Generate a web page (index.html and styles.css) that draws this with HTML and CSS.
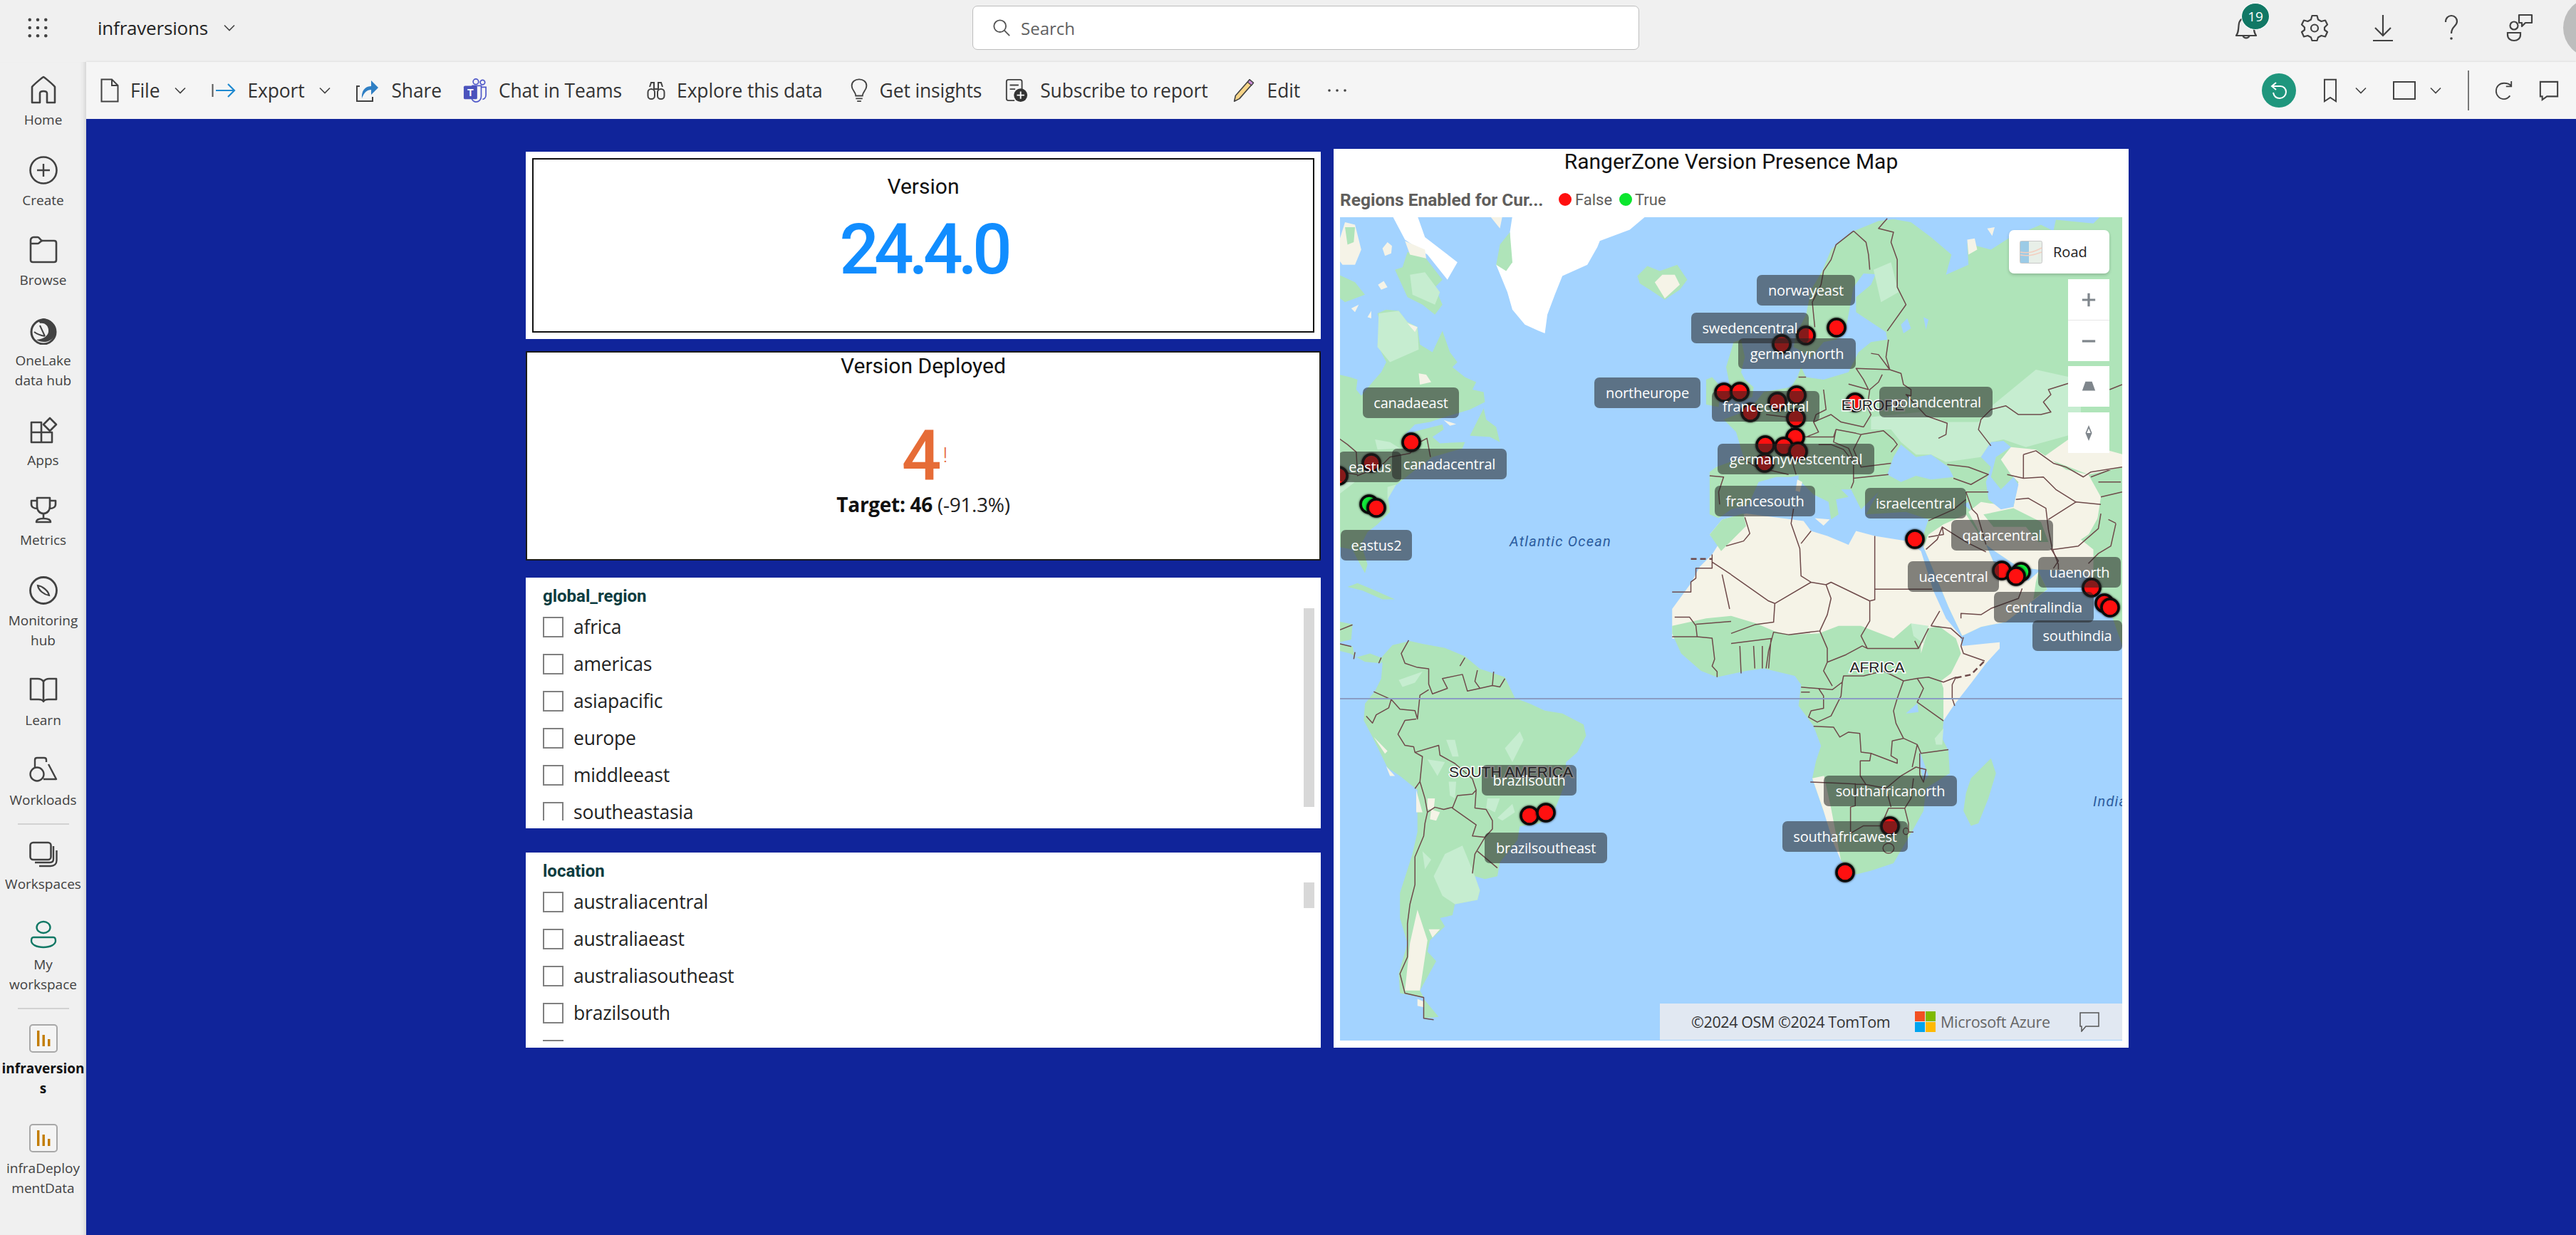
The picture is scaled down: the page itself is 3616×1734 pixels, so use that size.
FILE: index.html
```html
<!DOCTYPE html>
<html lang="en">
<head>
<meta charset="utf-8">
<title>infraversions</title>
<link rel="stylesheet" href="styles.css">
</head>
<body>
<svg class="defs" width="0" height="0"><defs>
<symbol id="chev" viewBox="0 0 16 10"><path d="M1 1.5 L8 8.5 L15 1.5" fill="none" stroke="currentColor" stroke-width="1.6"/></symbol>
<symbol id="report" viewBox="0 0 40 40"><rect x="1" y="1" width="38" height="38" rx="4" fill="#f4f4f4" stroke="#a8a8a8" stroke-width="2"/><rect x="11" y="9" width="3.4" height="22" fill="#c27c00"/><rect x="18.5" y="15" width="3.4" height="16" fill="#c27c00"/><rect x="26" y="21" width="3.4" height="10" fill="#c27c00"/></symbol>
</defs></svg>

<header class="topbar">
  <div class="top-left">
    <svg class="waffle" viewBox="0 0 32 32"><g fill="#424242"><circle cx="4" cy="4" r="2.4"/><circle cx="16" cy="4" r="2.4"/><circle cx="28" cy="4" r="2.4"/><circle cx="4" cy="16" r="2.4"/><circle cx="16" cy="16" r="2.4"/><circle cx="28" cy="16" r="2.4"/><circle cx="4" cy="28" r="2.4"/><circle cx="16" cy="28" r="2.4"/><circle cx="28" cy="28" r="2.4"/></g></svg>
    <span class="app-name">infraversions</span>
    <svg class="chev chev-top"><use href="#chev"/></svg>
  </div>
  <div class="search">
    <svg class="search-ico" viewBox="0 0 28 28"><circle cx="11.5" cy="11.5" r="9" fill="none" stroke="#555" stroke-width="2"/><path d="M18 18 L26 26" stroke="#555" stroke-width="2"/></svg>
    <span>Search</span>
  </div>
  <div class="top-right">
    <div class="ti bell">
      <svg viewBox="0 0 30 40"><path d="M1 31 C4 27 4 24 4.500 17 C5 9 9 6 15 6 C21 6 25 9 25.500 17 C26 24 26 27 29 31 Z" fill="none" stroke="#424242" stroke-width="2.200" stroke-linejoin="round"/><path d="M10.500 31.500 A5 5 0 0 0 19.500 31.500" fill="none" stroke="#424242" stroke-width="2.200"/></svg>
      <span class="badge">19</span>
    </div>
    <svg class="ti" viewBox="0 0 40 40"><path d="M16.500 3 H23.500 L25 8.500 L29.500 11 L35 9.500 L38 15.500 L34 19.500 V23 L38 26 L35 32.500 L29.500 31 L25 33.500 L23.500 38 H16.500 L15 33.500 L10.500 31 L5 32.500 L2 26 L6 23 V19.500 L2 15.500 L5 9.500 L10.500 11 L15 8.500 Z" fill="none" stroke="#424242" stroke-width="2.200" stroke-linejoin="round"/><circle cx="20" cy="20.500" r="5" fill="none" stroke="#424242" stroke-width="2.200"/></svg>
    <svg class="ti" viewBox="0 0 40 40"><path d="M20 2 V31 M9 20 L20 31 L31 20 M6 38 H34" fill="none" stroke="#424242" stroke-width="2.200"/></svg>
    <svg class="ti" viewBox="0 0 40 40"><path d="M12 12 C12 6 16 3 20 3 C25 3 28 7 28 11 C28 18 20 18 20 28" fill="none" stroke="#424242" stroke-width="2.200"/><circle cx="20" cy="35" r="1.800" fill="#424242"/></svg>
    <svg class="ti" viewBox="0 0 40 40"><circle cx="12" cy="17" r="5.500" fill="none" stroke="#424242" stroke-width="2.200"/><path d="M3 27 H21 V30 C21 35 17 38 12 38 C7 38 3 35 3 30 Z" fill="none" stroke="#424242" stroke-width="2.200"/><path d="M19 2 H37 V13 H28 L23 18 V13 H19 Z" fill="none" stroke="#424242" stroke-width="2.200" stroke-linejoin="round"/></svg>
    <div class="avatar"></div>
  </div>
</header>

<div class="body-row">
  <nav class="sidebar">
    <a class="nav"><svg viewBox="0 0 40 40"><path d="M20 2 C17 4 6 13 4 16 V38 H15 V25 C15 21 25 21 25 25 V38 H36 V16 C34 13 23 4 20 2 Z" fill="none" stroke="#424242" stroke-width="2.600" stroke-linejoin="round"/></svg><span>Home</span></a>
    <a class="nav"><svg viewBox="0 0 40 40"><circle cx="20" cy="20" r="18.500" fill="none" stroke="#424242" stroke-width="2.600"/><path d="M20 11 V29 M11 20 H29" stroke="#424242" stroke-width="2.400"/></svg><span>Create</span></a>
    <a class="nav"><svg viewBox="0 0 40 40"><path d="M2 6 C2 4 4 2 6 2 H12 C15 2 15 7 19 7 H35 C37 7 38 8 38 10 V34 C38 36 37 37 35 37 H5 C3 37 2 36 2 34 Z M2 11 H12 C15 11 15 7 19 7" fill="none" stroke="#424242" stroke-width="2.600"/></svg><span>Browse</span></a>
    <a class="nav two"><svg viewBox="0 0 40 40"><circle cx="20" cy="22" r="17" fill="none" stroke="#424242" stroke-width="3"/><path d="M20 3 C14 4 12 8 16 10 C22 9 28 14 27 22 C26 28 20 32 10 33 C18 38 32 38 37 24 C38 14 30 4 20 3 Z" fill="#424242"/><path d="M15 13 L22 28 M7 22 C12 26 16 27 22 28" fill="none" stroke="#424242" stroke-width="2"/></svg><span>OneLake data hub</span></a>
    <a class="nav"><svg viewBox="0 0 40 40"><path d="M3 9 H17 V23 H3 Z M3 23 H17 V37 H3 Z M17 23 H32 V37 H17 Z" fill="none" stroke="#424242" stroke-width="2.600" stroke-linejoin="round"/><path d="M29 3 L38 12 L29 21 L20 12 Z" fill="none" stroke="#424242" stroke-width="2.600" stroke-linejoin="round"/></svg><span>Apps</span></a>
    <a class="nav"><svg viewBox="0 0 40 40"><path d="M11 3 H29 V15 C29 21 25 25 20 25 C15 25 11 21 11 15 Z M11 7 H3 V12 C3 16 7 18 11 18 M29 7 H37 V12 C37 16 33 18 29 18 M20 25 V32 M10 37 C10 33 14 32 20 32 C26 32 30 33 30 37 Z" fill="none" stroke="#424242" stroke-width="2.600" stroke-linejoin="round"/></svg><span>Metrics</span></a>
    <a class="nav two"><svg viewBox="0 0 40 40"><circle cx="20" cy="20" r="18.500" fill="none" stroke="#424242" stroke-width="2.800"/><path d="M12 13 C19 14 27 21 28 27 C21 26 13 20 12 13 Z" fill="none" stroke="#424242" stroke-width="2.200"/></svg><span>Monitoring hub</span></a>
    <a class="nav"><svg viewBox="0 0 40 40"><path d="M20 8 C18 5 15 4 12 4 H2 V33 H13 C16 33 19 34 20 36 C21 34 24 33 27 33 H38 V4 H28 C25 4 22 5 20 8 Z M20 8 V36" fill="none" stroke="#424242" stroke-width="2.600" stroke-linejoin="round"/></svg><span>Learn</span></a>
    <a class="nav n95"><svg viewBox="0 0 40 40"><path d="M8 17 V6 C8 4 9 3 11 3 H21 C23 3 24 4 24 6 V9" fill="none" stroke="#424242" stroke-width="2.400"/><circle cx="11" cy="26" r="9.500" fill="none" stroke="#424242" stroke-width="2.400"/><path d="M27 12 L38 33 H20" fill="none" stroke="#424242" stroke-width="2.400" stroke-linejoin="round"/></svg><span>Workloads</span></a>
    <div class="divider"></div>
    <a class="nav"><svg viewBox="0 0 40 40"><rect x="1.500" y="4" width="29" height="24" rx="4" fill="none" stroke="#424242" stroke-width="2.600"/><path d="M34 9 V27 C34 30 32 32 29 32 H8 M38.500 15 V29 C38.500 34 35 37 30 37 H14" fill="none" stroke="#424242" stroke-width="2.400"/></svg><span>Workspaces</span></a>
    <a class="nav n123"><svg viewBox="0 0 40 40"><ellipse cx="20" cy="10" rx="9.500" ry="8" fill="none" stroke="#117865" stroke-width="2.400"/><path d="M6 24 H34 C37 24 37 27 37 29 C37 34 30 38 20 38 C10 38 3 34 3 29 C3 27 3 24 6 24 Z" fill="none" stroke="#117865" stroke-width="2.400"/></svg><span>My workspace</span></a>
    <div class="divider"></div>
    <a class="nav two active"><svg><use href="#report"/></svg><span>infraversions</span></a>
    <a class="nav two"><svg><use href="#report"/></svg><span>infraDeploymentData</span></a>
  </nav>

  <div class="main">
    <div class="toolbar">
      <div class="tb tb-file">
        <svg class="tbi w26" viewBox="0 0 26 34"><path d="M1.500 1.500 H16 L24.500 10 V32.500 H1.500 Z M16 1.500 V10 H24.500" fill="none" stroke="#424242" stroke-width="2"/></svg>
        <span>File</span><svg class="chev"><use href="#chev"/></svg>
      </div>
      <div class="tb tb-export">
        <svg class="tbi w34" viewBox="0 0 34 24"><path d="M1.500 3 V21" stroke="#555" stroke-width="2"/><path d="M6 12 H32 M23 3 L32 12 L23 21" fill="none" stroke="#1f8ad0" stroke-width="2.200"/></svg>
        <span>Export</span><svg class="chev"><use href="#chev"/></svg>
      </div>
      <div class="tb tb-share">
        <svg class="tbi w34" viewBox="0 0 34 34"><path d="M6 11 H2 V32 H24 V26" fill="none" stroke="#424242" stroke-width="2"/><path d="M9 28 C8 17 14 11 22 11 V3 L32 13 L22 23 V16 C16 16 12 20 9 28 Z" fill="#2f7fc4"/></svg>
        <span>Share</span>
      </div>
      <div class="tb tb-teams">
        <svg class="tbi w34" viewBox="0 0 34 36"><circle cx="28" cy="6" r="3.500" fill="none" stroke="#5059c9" stroke-width="1.800"/><circle cx="18" cy="5" r="4" fill="none" stroke="#5059c9" stroke-width="1.800"/><path d="M26 13 H33 V25 C33 29 30 31 28 31" fill="none" stroke="#5059c9" stroke-width="1.800"/><path d="M12 11 H26 V27 C26 32 22 35 18 35 C15 35 12 32 12 30" fill="none" stroke="#5059c9" stroke-width="1.800"/><rect x="0" y="11" width="20" height="20" rx="2" fill="#4b53bc"/><text class="teams-t" x="10" y="26">T</text></svg>
        <span>Chat in Teams</span>
      </div>
      <div class="tb tb-explore">
        <svg class="tbi w26" viewBox="0 0 26 28"><path d="M4 9 L6 3 H10 V12 M22 9 L20 3 H16 V12 M10 12 H16" fill="none" stroke="#424242" stroke-width="2"/><rect x="1.500" y="12" width="9.500" height="14" rx="4.500" fill="none" stroke="#424242" stroke-width="2"/><rect x="15" y="12" width="9.500" height="14" rx="4.500" fill="none" stroke="#424242" stroke-width="2"/></svg>
        <span>Explore this data</span>
      </div>
      <div class="tb tb-insights">
        <svg class="tbi w26" viewBox="0 0 26 36"><path d="M8 26 C8 20 2 18 2 11 C2 5 7 1.500 13 1.500 C19 1.500 24 5 24 11 C24 18 18 20 18 26 Z M8 30 H18 M10 34 H16" fill="none" stroke="#424242" stroke-width="2"/></svg>
        <span>Get insights</span>
      </div>
      <div class="tb tb-sub">
        <svg class="tbi w34" viewBox="0 0 34 36"><path d="M14 33 H5 C3 33 2 32 2 30 V5 C2 3 3 2 5 2 H22 C24 2 25 3 25 5 V17 M7 10 H20 M7 16 H15" fill="none" stroke="#424242" stroke-width="2"/><circle cx="23" cy="25" r="10" fill="#333"/><path d="M23 19.500 V30.500 M17.500 25 H28.500" stroke="#fff" stroke-width="2"/></svg>
        <span>Subscribe to report</span>
      </div>
      <div class="tb tb-edit">
        <svg class="tbi w34" viewBox="0 0 34 38"><path d="M26 2 L32 7 L10 32 L2 36 L4 27 Z" fill="#f6d488" stroke="#424242" stroke-width="1.800" stroke-linejoin="round"/><path d="M26 2 L32 7 L29 11 L23 6 Z" fill="#c98ad6" stroke="#424242" stroke-width="1.400"/></svg>
        <span>Edit</span>
      </div>
      <svg class="tb-dots" viewBox="0 0 28 6"><circle cx="3" cy="3" r="1.800" fill="#424242"/><circle cx="14" cy="3" r="1.800" fill="#424242"/><circle cx="25" cy="3" r="1.800" fill="#424242"/></svg>

      <div class="tb-right">
        <div class="reset"><svg viewBox="0 0 24 26"><path d="M8 2 L2 7 L8 12 M3 7 H14 C19 7 22 11 22 15 C22 20 18 24 13 24 C8 24 5 21 4 16" fill="none" stroke="#fff" stroke-width="2"/></svg></div>
        <svg class="tr-book" viewBox="0 0 22 38"><path d="M2 2 H20 V36 L11 30 L2 36 Z" fill="none" stroke="#424242" stroke-width="2.200"/></svg>
        <svg class="chev chev-a"><use href="#chev"/></svg>
        <svg class="tr-rect" viewBox="0 0 32 26"><rect x="1" y="1" width="30" height="24" fill="none" stroke="#424242" stroke-width="2"/></svg>
        <svg class="chev chev-b"><use href="#chev"/></svg>
        <div class="tr-sep"></div>
        <svg class="tr-ref" viewBox="0 0 28 30"><path d="M23 23 C20 27 17 28 14 28 C7 28 2 22 2 16 C2 9 7 4 14 4 C18 4 22 5 25 8 M25 1 V9 H17" fill="none" stroke="#424242" stroke-width="2"/></svg>
        <svg class="tr-com" viewBox="0 0 30 30"><path d="M2 2 H28 V24 H12 L5 29 V24 H2 Z" fill="none" stroke="#424242" stroke-width="2.200"/></svg>
      </div>
    </div>

    <main class="canvas">
      <div class="report">
        <div class="col-left">
          <section class="card card-version">
            <div class="inner">
              <div class="card-title">Version</div>
              <div class="big blue">24.4.0</div>
            </div>
          </section>
          <section class="card card-kpi">
            <div class="card-title kpi-title">Version Deployed</div>
            <div class="kpi-value"><span class="big orange">4</span><span class="bang">!</span></div>
            <div class="kpi-target"><b>Target: 46</b> (-91.3%)</div>
          </section>
          <section class="card slicer slicer-a">
            <div class="slicer-title">global_region</div>
            <div class="slicer-list">
              <div class="opt"><i></i>africa</div>
              <div class="opt"><i></i>americas</div>
              <div class="opt"><i></i>asiapacific</div>
              <div class="opt"><i></i>europe</div>
              <div class="opt"><i></i>middleeast</div>
              <div class="opt"><i></i>southeastasia</div>
            </div>
            <div class="thumb thumb-a"></div>
          </section>
          <section class="card slicer slicer-b">
            <div class="slicer-title">location</div>
            <div class="slicer-list">
              <div class="opt"><i></i>australiacentral</div>
              <div class="opt"><i></i>australiaeast</div>
              <div class="opt"><i></i>australiasoutheast</div>
              <div class="opt"><i></i>brazilsouth</div>
              <div class="opt"><i></i>brazilsoutheast</div>
            </div>
            <div class="thumb thumb-b"></div>
          </section>
        </div>

        <section class="card card-map">
          <div class="map-title">RangerZone Version Presence Map</div>
          <div class="legend">
            <b>Regions Enabled for Cur...</b>
            <span class="dot red"></span><span class="lg-f">False</span>
            <span class="dot green"></span><span>True</span>
          </div>
          <div class="map">
            <svg class="geo" viewBox="0 0 1098 1156">
              <!-- Americas, north -->
              <g transform="scale(.3507)">
                <path class="land" d="M-5,630 L40,640 L70,650 L65,690 L85,715 L130,660 L165,620 L185,580 L150,510 L165,440 L150,385 L185,370 L235,375 L270,420 L310,440 L320,510 L370,540 L410,455 L440,540 L470,580 L450,600 L500,640 L545,660 L530,690 L575,700 L580,740 L520,770 L420,800 L360,820 L300,830 L260,870 L330,850 L410,830 L415,850 L370,880 L400,905 L500,900 L490,925 L370,960 L290,1020 L240,1060 L190,1100 L200,1180 L150,1230 L110,1260 L85,1310 L110,1390 L100,1425 L70,1370 L50,1330 L-5,1320 Z"/>
                <path class="lite" d="M155,385 L235,375 L270,420 L310,440 L315,530 L200,580 L150,520 Z M140,890 L200,900 L240,925 L150,930 Z M-5,1040 L60,1060 L-5,1110 Z M190,1080 L225,1070 L190,1130 Z"/>
                <path class="dry" d="M270,425 L310,440 L300,460 Z M315,625 L345,630 L365,660 L320,670 Z"/>
                <path class="land" d="M250,200 L270,140 L340,160 L410,250 L380,280 L410,350 L380,390 L330,350 L270,320 L220,210 Z"/>
                <path class="lite" d="M280,230 L340,220 L400,300 L380,350 L290,310 Z"/>
                <path class="ice" d="M210,-5 L310,-5 L340,80 L470,180 L430,250 L350,150 L260,90 Z"/>
                <path class="dry" d="M260,95 L340,130 L345,165 L280,150 Z M-5,100 L20,20 L60,30 L85,130 L60,190 L10,190 L-5,170 Z"/>
                <path class="land" d="M20,40 L60,40 L55,100 L30,110 Z M-5,230 L60,260 L100,310 L20,340 L-5,320 Z M520,875 L575,765 L585,810 L625,840 L640,900 L600,880 Z M30,1480 L70,1465 L130,1490 L220,1530 L170,1530 L90,1495 Z"/>
                <path class="dry" d="M170,125 L190,100 L208,115 L205,145 L180,155 Z M152,270 L175,255 L190,280 L165,290 Z M45,365 L75,350 L60,380 Z M110,400 L125,375 L125,405 Z M415,812 L465,828 L440,835 Z"/>
                <path class="ice" d="M690,-5 L1225,-5 L1160,50 L1040,95 L1030,120 L990,190 L890,235 L860,310 L830,390 L820,465 L795,455 L740,430 L690,370 L670,300 L625,190 L680,120 L680,60 Z"/>
                <path class="land" d="M625,190 L640,110 L680,60 L690,180 L665,215 Z"/>
                <path class="dry" d="M600,-5 L650,-5 L640,45 Z"/>
                <path class="land" d="M1190,235 L1230,195 L1280,215 L1350,190 L1390,250 L1360,290 L1300,330 L1240,290 L1200,265 Z"/>
                <path class="dry" d="M1260,260 L1290,230 L1340,230 L1360,270 L1300,325 Z"/>
                <path class="b" d="M-5,885 L30,910 L65,940 L70,1025 M68,1035 L160,1000 L200,960 L280,945 L320,900 L348,885 L362,960 M0,1020 L70,1030"/>
              </g>
              <!-- South America -->
              <g transform="translate(0,550) scale(.3507,.391)">
                <path class="land" d="M170,195 L160,180 L210,130 L280,115 L330,125 L420,140 L500,170 L560,215 L660,245 L700,320 L760,340 L820,365 L890,375 L975,415 L985,455 L950,515 L905,550 L895,640 L860,720 L800,770 L720,780 L710,830 L640,910 L630,960 L580,970 L540,960 L530,980 L560,1010 L550,1045 L460,1060 L450,1100 L400,1110 L420,1140 L360,1190 L350,1230 L385,1265 L320,1370 L335,1395 L240,1380 L235,1310 L270,1200 L240,1110 L240,1020 L290,880 L310,800 L310,650 L240,600 L190,570 L130,460 L95,400 L100,340 L140,295 L165,250 Z"/>
                <path class="land" d="M335,1400 L395,1465 L335,1470 Z M-5,45 L50,55 L45,110 L-5,120 Z M-5,125 L50,135 L60,175 L120,160 L165,175 L165,195 L100,190 L40,160 L-5,150 Z"/>
                <path class="lite" d="M375,960 L420,880 L490,850 L540,960 L560,1010 L550,1045 L460,1060 L410,1030 Z M660,500 L720,440 L735,470 L690,550 Z M425,470 L460,470 L475,530 L450,530 Z M350,540 L420,550 L390,600 Z M435,620 L465,620 L460,680 L440,670 Z M590,680 L640,680 L620,730 L585,715 Z M630,750 L690,700 L700,730 L650,760 Z M235,255 L330,225 L300,265 L250,280 Z M330,870 L365,900 L340,935 Z"/>
                <path class="dry" d="M310,1080 L350,1190 L320,1370 L260,1370 L280,1200 Z M305,650 L330,730 L305,730 Z M350,680 L380,680 L375,720 L350,720 Z M365,720 L400,730 L385,760 L360,755 Z M135,460 L190,510 L180,520 Z M185,565 L220,600 L200,600 Z M355,1150 L400,1150 L370,1180 Z M310,1400 L335,1410 L335,1430 L310,1425 Z"/>
                <path class="b" d="M275,112 L245,160 L260,195 L310,210 L355,215 L355,270 L370,305 L430,285 L410,250 L490,235 L510,295 L560,285 L610,275 L640,280 L660,250 M550,220 L540,260 L560,285 M615,225 L610,275 M135,297 L205,325 L240,360 L300,365 L310,395 L320,310 L355,290 M205,325 L195,355 L145,380 L130,410 L105,385 M305,395 L260,400 L232,450 L260,490 L295,495 L300,515 L395,490 L400,525 L460,555 L530,610 L545,650 L540,715 L585,720 L610,760 L610,790 L580,820 L530,815 L545,775 L450,715 L470,670 L530,665 L545,650 M300,515 L330,530 L320,620 L340,680 L350,730 L380,712 L415,720 L450,712 M350,730 L340,770 L335,815 L300,890 L300,990 L280,1060 L270,1130 L270,1250 L240,1310 L260,1380 L335,1395 L335,1470 L375,1475 M580,820 L540,880 L530,950 M550,870 L630,930 M320,620 L300,645 M500,175 L480,205 M0,75 L50,57 M0,125 L45,135 M60,155 L55,180 M165,175 L155,195"/>
              </g>
              <!-- Eurasia -->
              <g transform="translate(549,0) scale(.3507)">
                <path class="land" d="M250,520 L260,470 L300,390 L320,290 L365,215 L400,130 L480,60 L590,15 L650,8 L720,20 L800,80 L882,150 L860,230 L950,190 L945,105 L1040,130 L1110,85 L1240,30 L1290,55 L1300,10 L1450,25 L1480,-5 L1570,-5 L1570,1726 L1500,1526 L1450,1466 L1410,1416 L1230,1411 L1150,1400 L1060,1340 L1020,1310 L1050,1380 L1110,1430 L1190,1456 L1230,1420 L1265,1490 L1100,1620 L1000,1640 L925,1676 L870,1560 L800,1390 L770,1320 L770,1270 L790,1210 L700,1180 L540,1190 L590,1100 L520,1170 L480,1090 L430,1090 L330,1020 L240,1040 L180,1040 L110,1060 L70,1150 L0,1170 L-50,1205 L-86,1190 L-86,1020 L-60,1000 L50,960 L20,860 L-30,810 L75,770 L130,700 L240,680 L265,640 L280,600 L300,640 L370,650 L470,620 L510,540 L560,500 L625,490 L620,460 L500,380 L500,320 L560,270 L578,228 L530,225 L490,280 L470,390 L460,440 L420,490 L370,500 L320,560 L270,530 Z"/>
                <path class="land" d="M10,500 L40,490 L55,560 L40,620 L55,650 L90,680 L85,720 L20,740 L0,720 L-10,650 L-20,600 L-5,550 Z M-100,650 L-76,640 L-40,680 L-50,760 L-100,750 Z M270,1030 L330,1020 L440,1090 L470,1120 L420,1130 L430,1190 L400,1210 L390,1140 L330,1110 L270,1050 Z"/>
                <path class="dry" d="M265,1050 L285,1060 L275,1100 L258,1095 Z M335,1205 L395,1210 L370,1235 Z M945,90 L975,85 L985,130 L950,150 Z M1025,45 L1055,40 L1045,75 Z"/>
                <path class="lite" d="M560,800 L760,780 L860,820 L990,820 L1050,750 L1220,610 L1400,650 L1400,860 L1180,920 L1090,890 L1040,900 L1000,960 L860,980 L800,950 L740,950 L680,900 L640,850 L560,850 Z M570,210 L640,180 L670,300 L600,340 Z"/>
                <path class="sea" d="M625,1030 L650,960 L680,910 L740,960 L800,950 L870,1000 L890,1040 L800,1050 L740,1035 L680,1060 Z M1375,1055 L1380,1050 L1420,1060 L1390,1070 Z M680,430 L705,405 L720,445 L690,465 Z M770,400 L790,410 L780,450 Z M930,1150 L950,1140 L960,1175 Z"/>
                <path class="dry" d="M1080,970 L1120,920 L1220,930 L1340,1010 L1430,1030 L1480,1120 L1460,1250 L1400,1290 L1450,1330 L1450,1466 L1410,1416 L1230,1411 L1150,1400 L1060,1340 L1020,1310 L950,1180 L1000,1140 L1130,1160 L1150,1060 L1120,1030 Z M1250,960 L1350,890 L1570,950 L1570,1000 L1430,1030 Z"/>
                <path class="sea" d="M1040,900 L1090,895 L1120,920 L1060,960 L1040,1040 L1080,1090 L1130,1040 L1150,1070 L1130,1160 L1080,1170 L1030,1130 L1020,1060 L1040,1000 L1000,960 Z"/>
                <path class="dry" d="M770,1320 L800,1390 L870,1560 L925,1676 L1000,1640 L1100,1620 L1265,1490 L1230,1420 L1190,1456 L1110,1430 L1050,1380 L1020,1310 L940,1190 L850,1230 L790,1270 Z"/>
                <path class="land" d="M1230,1420 L1265,1490 L1210,1530 L1220,1460 Z M1010,1190 L1130,1165 L1240,1220 L1270,1300 L1230,1300 L1180,1240 L1050,1240 Z M1440,1040 L1570,1000 L1570,1726 L1500,1526 L1450,1466 L1470,1330 L1420,1290 L1470,1200 L1490,1110 Z"/>
                <path class="b" d="M490,55 L540,100 L550,150 L555,210 M490,55 L420,110 L400,170 L370,215 L360,270 L325,340 L335,440 M625,5 L590,45 L650,60 L640,100 L665,170 L665,280 L700,350 L625,455 M630,490 L620,560 L635,610 L590,550 L560,545 M635,610 L680,625 L690,670 L720,690 L720,715 L700,710 L780,795 L865,825 L860,870 L830,885 M635,610 L500,605 L530,650 L550,690 L470,668 M605,630 L590,660 L555,690 L545,760 L560,790 L530,840 M370,690 L380,770 L340,790 L330,820 L400,790 L440,820 L530,840 M330,820 L350,860 L300,880 L410,880 L420,850 L500,865 L520,870 L610,855 L650,890 L665,910 L640,940 M420,850 L410,900 L470,925 L490,970 M350,910 L400,910 L450,930 L490,980 L490,1060 L480,1085 M490,1045 L630,1030 M520,870 L490,930 L520,1000 L640,985 M1350,665 L1270,690 L1280,710 L1250,740 L1280,780 L1240,790 L1150,790 L1100,755 L1040,770 L1000,810 L990,850 L1040,915 M1565,670 L1515,690 M1170,950 L1220,935 L1290,985 L1340,1000 L1410,1040 L1440,1020 L1565,1000 M1170,950 L1170,1045 L1105,1030 M1170,1045 L1250,1040 L1300,1090 L1380,1140 M1140,1130 L1190,1125 L1260,1165 L1270,1250 L1285,1325 L1310,1390 L1310,1410 M1270,1210 L1380,1140 L1480,1150 M1440,1040 L1520,1010 M865,990 L950,1000 L1030,1030 L960,1070 L890,1045 M940,1100 L1030,1100 M940,1100 L965,1170 L985,1190 L1020,1310 M790,1215 L890,1170 L940,1130 M780,1330 L825,1290 L845,1240 L940,1300 L1020,1340 M845,1240 L850,1270 L790,1280 M140,790 L220,800 L250,860 L300,880 M150,900 L230,930 L260,1030 M-86,1035 L-30,1040 L-50,1100 L-46,1150 M35,960 L100,1000 L230,1030 M270,640 L300,640 M1510,1210 L1540,1225 M1470,1060 L1560,1060 M1480,1120 L1565,1100"/>
              </g>
              <!-- Africa and the Middle East -->
              <g transform="translate(549,395) scale(.3507)">
                <path class="dry" d="M-36,84 L60,60 L290,90 L320,130 L385,150 L470,185 L500,130 L575,150 L700,170 L760,210 L810,370 L860,480 L915,545 L925,590 L1075,575 L1075,600 L1020,660 L960,740 L890,830 L850,890 L840,730 L760,620 L520,560 L0,560 L-236,560 L-236,442 L-161,339 L-126,274 L-76,224 L-51,184 L-86,144 Z"/>
                <path class="land" d="M760,620 L790,520 L830,510 L900,560 L920,620 L880,700 L840,730 L850,760 L850,890 L845,960 L870,1010 L875,1100 L780,1160 L770,1250 L720,1340 L650,1460 L560,1490 L500,1505 L440,1450 L370,1250 L325,1120 L340,1050 L360,990 L330,910 L270,830 L280,745 L255,710 L130,680 L60,690 L-56,715 L-120,690 L-200,620 L-236,540 L-236,510 L-100,480 L0,470 L100,500 L170,530 L230,545 L350,540 L430,510 L520,510 L570,530 L650,560 L720,500 L760,540 Z"/>
                <path class="land" d="M-36,84 L50,60 L60,110 L-40,210 L-86,144 Z M940,1180 L960,1120 L1040,1040 L1060,1100 L1030,1200 L990,1300 L960,1310 L930,1250 Z"/>
                <path class="lite" d="M720,500 L790,510 L770,580 L730,550 Z M815,960 L850,920 L845,985 L820,985 Z"/>
                <path class="dry" d="M325,1120 L372,1110 L400,1240 L440,1450 L410,1380 L370,1250 Z"/>
                <path class="sea" d="M700,860 L745,820 L750,855 L710,860 Z M755,1010 L790,1110 L770,1135 L755,1060 Z"/>
                <path class="b" d="M0,305 L150,410 L175,420 L320,335 L380,345 L400,335 L555,410 L575,405 L575,150 M575,363 L805,363 M555,410 L555,490 L520,550 L545,600 L620,600 L720,600 L750,600 L735,570 M320,335 L280,310 L275,200 L240,100 L250,40 M380,345 L400,400 L385,465 L355,530 L385,600 L385,655 L370,690 L405,750 M175,420 L170,495 L95,505 L0,540 M355,530 L230,545 L170,535 L150,610 L140,680 M385,655 L460,625 L525,590 L545,600 M405,765 L445,735 L450,710 L530,710 L610,690 L690,730 L745,720 L790,715 L850,735 L900,715 L885,745 L885,800 L895,830 M1015,650 L930,620 L920,590 L930,555 M690,730 L665,800 L650,850 L660,900 L690,960 L745,985 L760,1020 L870,1005 M745,720 L770,760 L745,815 L850,890 M690,960 L645,970 L640,1030 L665,1045 L665,1060 L560,1020 L520,1015 L515,940 L470,935 L435,955 L410,915 L330,912 M560,1020 L555,1050 L517,1050 L517,1110 L540,1145 L620,1160 L680,1110 L740,1075 L780,1085 L770,1135 L755,1105 L755,1020 M745,985 L725,1075 M317,1135 L440,1140 L540,1145 M497,1140 L497,1230 L478,1235 L478,1340 L530,1310 L600,1310 L630,1240 L695,1240 L710,1300 L710,1335 L730,1335 M620,1160 L640,1235 M730,1120 L720,1200 L695,1240 M280,755 L405,765 M280,775 L315,775 M350,760 L370,790 L370,840 L320,850 L310,875 L345,895 L400,870 L440,790 L445,735 M800,510 L880,520 L925,560 M790,520 L750,600 M800,510 L835,450 M0,580 L160,560 L150,680 M35,590 L40,700 M90,590 L95,680 M125,590 L125,680 M-236,374 L-161,374 L-161,334 L-141,319 L-141,279 L-76,279 L-76,224 M-76,254 L0,304 M-36,304 L-6,442 M-226,475 L-166,475 L-141,509 L-136,553 L-76,559 L-66,643 L-76,671 L-56,693 L-56,715 M-141,503 L0,492 M-236,553 L-131,553 M-20,190 L50,170 L75,140 L55,75 M280,180 L320,130 M1165,360 L1150,400 L1040,440 L1000,465 L920,460 L920,480 M1280,200 L1310,250 L1290,280 M1430,260 L1470,220 L1520,190 L1540,100 M1280,205 L1390,190 L1470,120 L1480,60"/>
                <path class="b dash" d="M-161,242 L-76,242 M900,718 L960,705 L1015,650"/>
                <ellipse class="b" cx="700" cy="1332" rx="11" ry="13"/>
                <ellipse class="b" cx="630" cy="1400" rx="22" ry="20"/>
              </g>
              <path class="equator" d="M0 676 H1098"/>
              <!-- Bubbles -->
              <g class="pins">
                <circle class="off" cx="100" cy="316" r="12"/><circle class="off" cx="44" cy="345" r="12"/><circle class="off" cx="-2" cy="363" r="12"/>
                <circle class="on" cx="41" cy="403" r="12"/><circle class="off" cx="51" cy="408" r="12"/>
                <circle class="off" cx="539" cy="246" r="12"/><circle class="off" cx="561" cy="245" r="12"/><circle class="off" cx="614" cy="259" r="12"/>
                <circle class="off" cx="641" cy="250" r="12"/><circle class="off" cx="576" cy="274" r="12"/><circle class="off" cx="640" cy="282" r="12"/>
                <circle class="off" cx="639" cy="309" r="12"/><circle class="off" cx="597" cy="320" r="12"/><circle class="off" cx="623" cy="322" r="12"/>
                <circle class="off" cx="643" cy="329" r="12"/><circle class="off" cx="596" cy="345" r="12"/><circle class="off" cx="620" cy="178" r="12"/>
                <circle class="off" cx="654" cy="166" r="12"/><circle class="off" cx="697" cy="155" r="12"/><circle class="off" cx="723" cy="260" r="12"/>
                <circle class="off" cx="807" cy="452" r="12"/><circle class="off" cx="929" cy="496" r="12"/><circle class="on" cx="956" cy="498" r="12"/>
                <circle class="off" cx="949" cy="504" r="12"/><circle class="off" cx="1055" cy="520" r="12"/><circle class="off" cx="1073" cy="542" r="12"/>
                <circle class="off" cx="1081" cy="548" r="12"/><circle class="off" cx="772" cy="855" r="12"/><circle class="off" cx="709" cy="920" r="12"/>
                <circle class="off" cx="266" cy="840" r="12"/><circle class="off" cx="289" cy="836" r="12"/>
              </g>
              <text class="place" x="748" y="271">EUROPE</text>
              <text class="place" x="240" y="786">SOUTH AMERICA</text>
              <text class="place" x="754" y="639">AFRICA</text>
              <text class="ocean" x="238" y="462">Atlantic Ocean</text>
              <text class="ocean" x="1057" y="827">India</text>
            </svg>

            <div class="lbl" style="left:32px;top:239px;width:135px">canadaeast</div>
            <div class="lbl" style="left:-2px;top:329px;width:88px">eastus</div>
            <div class="lbl" style="left:73px;top:325px;width:161px">canadacentral</div>
            <div class="lbl" style="left:1px;top:439px;width:100px">eastus2</div>
            <div class="lbl" style="left:357px;top:225px;width:149px">northeurope</div>
            <div class="lbl" style="left:493px;top:134px;width:165px">swedencentral</div>
            <div class="lbl" style="left:559px;top:170px;width:165px">germanynorth</div>
            <div class="lbl" style="left:585px;top:81px;width:138px">norwayeast</div>
            <div class="lbl" style="left:522px;top:244px;width:151px">francecentral</div>
            <div class="lbl" style="left:757px;top:238px;width:159px">polandcentral</div>
            <div class="lbl" style="left:530px;top:318px;width:220px">germanywestcentral</div>
            <div class="lbl" style="left:526px;top:377px;width:141px">francesouth</div>
            <div class="lbl" style="left:737px;top:380px;width:142px">israelcentral</div>
            <div class="lbl" style="left:858px;top:425px;width:143px">qatarcentral</div>
            <div class="lbl" style="left:797px;top:483px;width:128px">uaecentral</div>
            <div class="lbl" style="left:980px;top:477px;width:116px">uaenorth</div>
            <div class="lbl" style="left:918px;top:526px;width:140px">centralindia</div>
            <div class="lbl" style="left:972px;top:566px;width:126px">southindia</div>
            <div class="lbl" style="left:199px;top:769px;width:133px">brazilsouth</div>
            <div class="lbl" style="left:203px;top:864px;width:172px">brazilsoutheast</div>
            <div class="lbl" style="left:679px;top:784px;width:187px">southafricanorth</div>
            <div class="lbl" style="left:621px;top:848px;width:176px">southafricawest</div>

            <div class="road">
              <svg viewBox="0 0 32 32"><rect x=".5" y=".5" width="31" height="31" rx="2" fill="#e8efe8" stroke="#c8c8c8"/><rect x="1" y="1" width="12" height="30" fill="#9ccbe6"/><path d="M1 16 C12 18 20 16 31 10 M1 20 C12 22 20 20 31 16" stroke="#f3cfc0" stroke-width="1.500" fill="none"/></svg>
              <span>Road</span>
            </div>
            <div class="ctrl ctrl-zoom">
              <div class="ctrl-cell"><svg viewBox="0 0 24 24"><path d="M12 2 V22 M2 12 H22" stroke="#7f868c" stroke-width="3.500"/></svg></div>
              <div class="ctrl-cell"><svg viewBox="0 0 24 24"><path d="M2 12 H22" stroke="#7f868c" stroke-width="3.500"/></svg></div>
            </div>
            <div class="ctrl ctrl-pitch"><svg viewBox="0 0 24 24"><path d="M7 4 H17 L22 18 H2 Z" fill="#7f868c"/></svg></div>
            <div class="ctrl ctrl-rot"><svg viewBox="0 0 24 24"><path d="M12 0 L17 12 H7 Z" fill="#7f868c"/><path d="M12 24 L17 12 H7 Z" fill="#7f868c"/><path d="M12 5 L15 12 H9 Z" fill="#fff"/></svg></div>

            <div class="attrib">
              <span class="copy">©2024 OSM ©2024 TomTom</span>
              <svg class="mslogo" viewBox="0 0 29 29"><rect width="14" height="14" fill="#f25022"/><rect x="15" width="14" height="14" fill="#7fba00"/><rect y="15" width="14" height="14" fill="#00a4ef"/><rect x="15" y="15" width="14" height="14" fill="#ffb900"/></svg>
              <span class="azure">Microsoft Azure</span>
              <svg class="fb" viewBox="0 0 28 28"><path d="M1 1 H27 V20 H9 L3 27 V20 H1 Z" fill="none" stroke="#555" stroke-width="1.500"/></svg>
            </div>
          </div>
        </section>
      </div>
    </main>
  </div>
</div>
</body>
</html>
```

FILE: styles.css
```css
* { box-sizing: border-box; }
html, body { margin: 0; width: 3616px; height: 1734px; overflow: hidden; }
body { background: #f0f0f0; font-family: "Open Sans", "Noto Sans", sans-serif; color: #242424; display: flex; flex-direction: column; }
.defs { position: absolute; }
svg { display: block; flex: none; }

/* top bar */
.topbar { height: 87px; display: flex; align-items: center; flex: none; }
.top-left { width: 1365px; flex: none; display: flex; align-items: center; padding-left: 38px; margin-top: -9px; }
.waffle { width: 30px; height: 30px; }
.app-name { font-size: 26px; margin-left: 69px; letter-spacing: -.2px; }
.chev { width: 16px; height: 10px; color: #424242; }
.chev-top { margin-left: 22px; }
.search { width: 936px; flex: none; height: 62px; background: #fff; border: 1.5px solid #bdbdbd; border-radius: 7px; display: flex; align-items: center; padding-left: 27px; font-size: 24px; color: #616161; margin-top: -9px; }
.search-ico { width: 26px; height: 26px; margin-right: 14px; }
.top-right { display: flex; align-items: center; gap: 56px; margin-left: 832px; flex: none; margin-top: -9px; position: relative; }
.ti { width: 40px; height: 40px; position: relative; flex: none; }
.bell svg { width: 30px; height: 40px; margin-left: 5px; }
.badge { position: absolute; left: 13px; top: -15px; width: 40px; height: 38px; border-radius: 50%; background: #117865; border: 1.5px solid #fff; color: #fff; font-size: 19px; display: flex; align-items: center; justify-content: center; }
.avatar { width: 84px; height: 84px; border-radius: 50%; background: #bdbdbd; flex: none; margin-left: -15px; }

/* layout */
.body-row { flex: 1; display: flex; min-height: 0; }
.sidebar { width: 121px; flex: none; padding-top: 19px; display: flex; flex-direction: column; align-items: center; box-shadow: inset -8px 0 8px -8px #bdbdbd; }
.nav { height: 112.5px; width: 121px; display: flex; flex-direction: column; align-items: center; font-size: 19px; line-height: 28px; color: #424242; text-align: center; flex: none; }
.nav.two { height: 140px; }
.nav.n95 { height: 95px; }
.nav.n123 { height: 123px; }
.nav svg { width: 40px; height: 40px; margin-bottom: 8px; }
.nav span { width: 118px; overflow-wrap: anywhere; }
.nav.active { font-weight: 700; color: #111; }
.divider { width: 72px; height: 2px; background: #d2d2d2; flex: none; margin: 0 0 21px; }
.main { flex: 1; display: flex; flex-direction: column; min-width: 0; }

/* toolbar */
.toolbar { height: 80px; background: #f5f5f5; display: flex; align-items: center; padding-left: 20px; font-size: 26.400px; color: #333; flex: none; box-shadow: 0 -1px 2px #e0e0e0; }
.tb { display: flex; align-items: center; gap: 16px; white-space: nowrap; letter-spacing: -.1px; }
.tbi { height: 34px; }
.w26 { width: 26px; }
.w34 { width: 34px; }
.tb .chev { margin-left: 5px; }
.tb-export { margin-left: 36px; }
.tb-share { margin-left: 35px; }
.tb-teams { margin-left: 30px; }
.tb-explore { margin-left: 35px; }
.tb-insights { margin-left: 38px; }
.tb-sub { margin-left: 32px; }
.tb-edit { margin-left: 33px; }
.tb-dots { width: 28px; height: 6px; margin-left: 38px; }
.tb-right { margin-left: auto; display: flex; align-items: center; padding-right: 24px; }
.reset { width: 48px; height: 48px; border-radius: 50%; background: #1f967d; display: flex; align-items: center; justify-content: center; }
.reset svg { width: 24px; height: 26px; }
.tr-book { width: 22px; height: 34px; margin-left: 37px; }
.chev-a { margin-left: 24px; }
.tr-rect { width: 32px; height: 26px; margin-left: 37px; }
.chev-b { margin-left: 20px; }
.tr-sep { width: 2px; height: 56px; background: #777; margin-left: 37px; }
.tr-ref { width: 26px; height: 30px; margin-left: 36px; }
.tr-com { width: 28px; height: 30px; margin-left: 36px; }

/* canvas */
.canvas { flex: 1; background: #10249a; padding: 42px 0 0 617px; min-height: 0; }
.report { display: flex; gap: 18px; align-items: flex-start; }
.col-left { width: 1116px; display: flex; flex-direction: column; padding-top: 4px; }
.card { background: #fff; position: relative; }
.card-version { height: 263px; padding: 9px; }
.inner { height: 100%; border: 2px solid #111; display: flex; flex-direction: column; align-items: center; }
.card-title { font-family: Roboto, sans-serif; font-size: 30px; line-height: 36px; color: #111; }
.inner .card-title { margin-top: 20px; }
.big { font-family: Roboto, sans-serif; font-weight: 500; font-size: 98px; line-height: 100px; letter-spacing: -7px; }
.inner .big { margin-top: 21px; }
.blue { color: #118dff; }
.orange { color: #e66c37; letter-spacing: 0; }
.card-kpi { height: 294px; margin-top: 17px; border: 2px solid #1a1a1a; display: flex; flex-direction: column; align-items: center; }
.kpi-title { margin-top: 1px; }
.kpi-value { display: flex; align-items: flex-start; margin-top: 59px; margin-left: 4px; }
.bang { font-family: Roboto, sans-serif; font-size: 30px; font-weight: 300; color: #e66c37; margin: 30px 0 0 2px; line-height: 36px; }
.kpi-target { font-size: 28px; line-height: 34px; margin-top: 0; color: #222; letter-spacing: -.3px; }
.kpi-target b { color: #111; }

/* slicers */
.slicer { padding: 11px 0 0 24px; overflow: hidden; }
.slicer-a { height: 352px; margin-top: 24px; }
.slicer-b { height: 274px; margin-top: 34px; }
.slicer-title { font-family: Roboto, sans-serif; font-weight: 700; font-size: 24px; line-height: 30px; color: #0b3c40; }
.slicer-list { overflow: hidden; margin-top: 2px; }
.slicer-a .slicer-list { height: 298px; }
.slicer-b .slicer-list { height: 222px; }
.opt { height: 52px; display: flex; align-items: center; font-size: 26.500px; color: #222; letter-spacing: -.2px; }
.opt i { width: 29px; height: 29px; border: 2px solid #808080; margin-right: 14px; flex: none; }
.thumb { position: absolute; right: 9px; width: 15px; background: #d8d8d8; }
.thumb-a { top: 43px; height: 279px; }
.thumb-b { top: 42px; height: 36px; }

/* map */
.card-map { width: 1116px; height: 1262px; padding: 0 9px 9px; display: flex; flex-direction: column; }
.map-title { font-family: Roboto, sans-serif; font-size: 30px; line-height: 36px; text-align: center; color: #111; height: 36px; }
.legend { height: 60px; display: flex; align-items: center; font-family: Roboto, sans-serif; font-size: 22px; color: #605e5c; padding-top: 10px; }
.legend b { width: 307px; white-space: nowrap; font-weight: 700; font-size: 24.500px; }
.dot { width: 18px; height: 18px; border-radius: 50%; }
.dot.red { background: #ff0f0f; margin-right: 5px; }
.dot.green { background: #0ce62e; margin-right: 4px; }
.lg-f { width: 62px; }
.map { width: 1098px; height: 1156px; position: relative; overflow: hidden; background: #a3d3ff; flex: none; }
.geo { position: absolute; inset: 0; width: 1098px; height: 1156px; }
.land { fill: #afe4b9; }
.lite { fill: #c6edd0; }
.dry { fill: #f5f3e7; }
.ice { fill: #fff; }
.sea { fill: #a3d3ff; }
.b { fill: none; stroke: #6e4a4a; stroke-width: 1.500px; stroke-linejoin: round; vector-effect: non-scaling-stroke; }
.dash { stroke-width: 2.500px; stroke-dasharray: 8 5; }
.equator { stroke: #8a9dc4; stroke-width: 2px; }
.pins circle { stroke: #0a0a0a; stroke-width: 3.500px; filter: drop-shadow(0 0 1.500px #000); }
.off { fill: #ff1010; }
.on { fill: #12e83a; }
.place { font-family: "Liberation Sans", sans-serif; font-size: 21px; text-anchor: middle; fill: #222; stroke: #fff; stroke-width: 3px; paint-order: stroke; }
.ocean { font-family: Roboto, sans-serif; font-style: italic; font-size: 20px; letter-spacing: 1.200px; fill: #2b5c9e; }
.lbl { position: absolute; height: 43px; background: rgba(34, 34, 34, .55); border-radius: 7px; color: #fff; font-size: 20px; line-height: 43px; text-align: center; white-space: nowrap; letter-spacing: -.2px; }
.road { position: absolute; left: 939px; top: 18px; width: 141px; height: 61px; background: #fff; border-radius: 7px; box-shadow: 0 2px 4px rgba(0,0,0,.2); display: flex; align-items: center; padding-left: 15px; gap: 15px; font-size: 20px; color: #222; }
.road svg { width: 32px; height: 32px; }
.ctrl { position: absolute; left: 1022px; width: 58px; background: #fff; display: flex; align-items: center; justify-content: center; }
.ctrl svg { width: 22px; height: 24px; }
.ctrl-zoom { top: 87px; height: 115px; flex-direction: column; }
.ctrl-cell { flex: 1; width: 100%; display: flex; align-items: center; justify-content: center; }
.ctrl-cell:first-child { border-bottom: 1px solid #e6e6e6; }
.ctrl-pitch { top: 209px; height: 57px; }
.ctrl-rot { top: 274px; height: 57px; }
.attrib { position: absolute; left: 449px; top: 1104px; width: 649px; height: 51px; background: #e1e8f2; display: flex; align-items: center; padding-left: 44px; font-size: 21.500px; color: #333; }
.copy { width: 314px; white-space: nowrap; letter-spacing: -.4px; }
.mslogo { width: 29px; height: 29px; }
.azure { width: 195px; margin-left: 7px; color: #666; white-space: nowrap; letter-spacing: -.3px; }
.fb { width: 28px; height: 28px; }
.teams-t { font-family: "Liberation Sans", sans-serif; font-size: 15px; font-weight: 700; fill: #fff; text-anchor: middle; }
```
